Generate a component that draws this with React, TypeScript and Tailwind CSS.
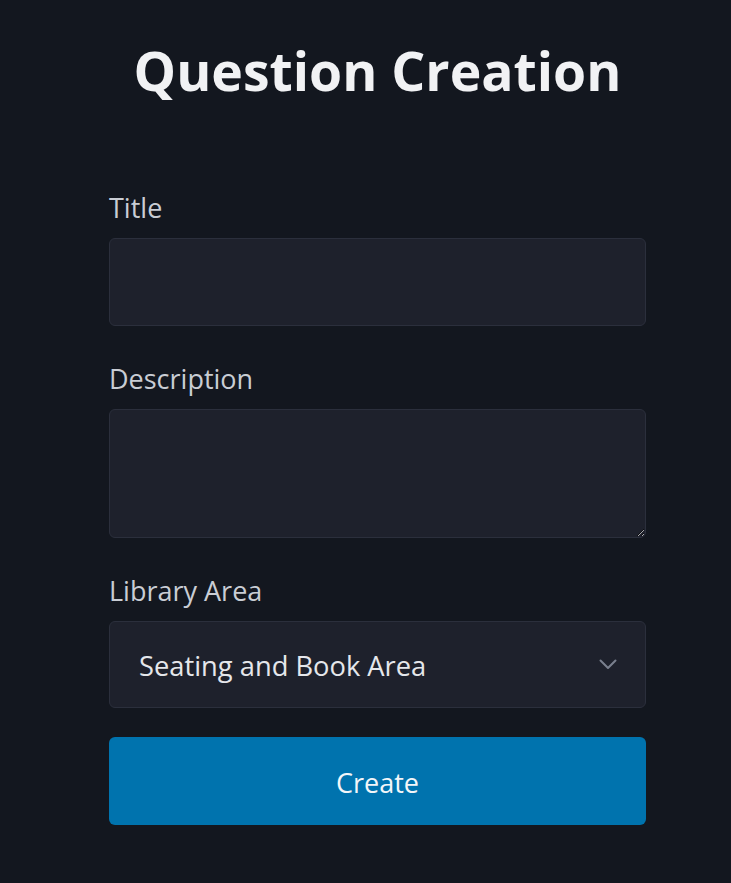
import React from "react";

export default function App() {
  return (
    <div
      className="min-h-[883px] w-full bg-[#13171f]"
      style={{ fontFamily: '"Open Sans", "Noto Sans", sans-serif' }}
    >
      <div className="ml-[109px] w-[537px] pt-[40px]">
        <h1 className="text-center text-[53.5px] leading-[62px] font-bold text-[#f1f2f4]">
          Question Creation
        </h1>
        <form className="mt-[88px] flex flex-col" onSubmit={(e) => e.preventDefault()}>
          <label className="block text-[27px] leading-[36px] mb-[12px] text-[#c9cdd4]">Title</label>
          <input
            type="text"
            className="h-[88px] w-full rounded-md border border-[#2b2f3c] bg-[#1e212c] px-[29px] text-[27px] text-[#e5e7eb] outline-none"
          />
          <label className="mt-[35px] block text-[27px] leading-[36px] mb-[12px] text-[#c9cdd4]">
            Description
          </label>
          <textarea className="h-[129px] w-full rounded-md border border-[#2b2f3c] bg-[#1e212c] px-[29px] py-3 text-[27px] text-[#e5e7eb] outline-none" />
          <label className="mt-[35px] block text-[27px] leading-[36px] mb-[12px] text-[#c9cdd4]">
            Library Area
          </label>
          <div className="relative h-[87px] w-full rounded-md border border-[#2b2f3c] bg-[#1e212c]">
            <div className="flex h-full items-center justify-between pl-[29px] pr-[28px]">
              <span className="pt-[4px] text-[27.3px] text-[#e5e7eb]">Seating and Book Area</span>
              <svg width="18" height="11" viewBox="0 0 18 11" fill="none">
                <path d="M1.5 1.5 L9 9 L16.5 1.5" stroke="#7a808e" strokeWidth="2" strokeLinecap="round" strokeLinejoin="round" />
              </svg>
            </div>
          </div>
          <button
            type="submit"
            className="mt-[29px] h-[88px] w-full rounded-md bg-[#0073ae] pt-[4px] text-[27px] text-[#f3f6f9]"
          >
            Create
          </button>
        </form>
      </div>
    </div>
  );
}
